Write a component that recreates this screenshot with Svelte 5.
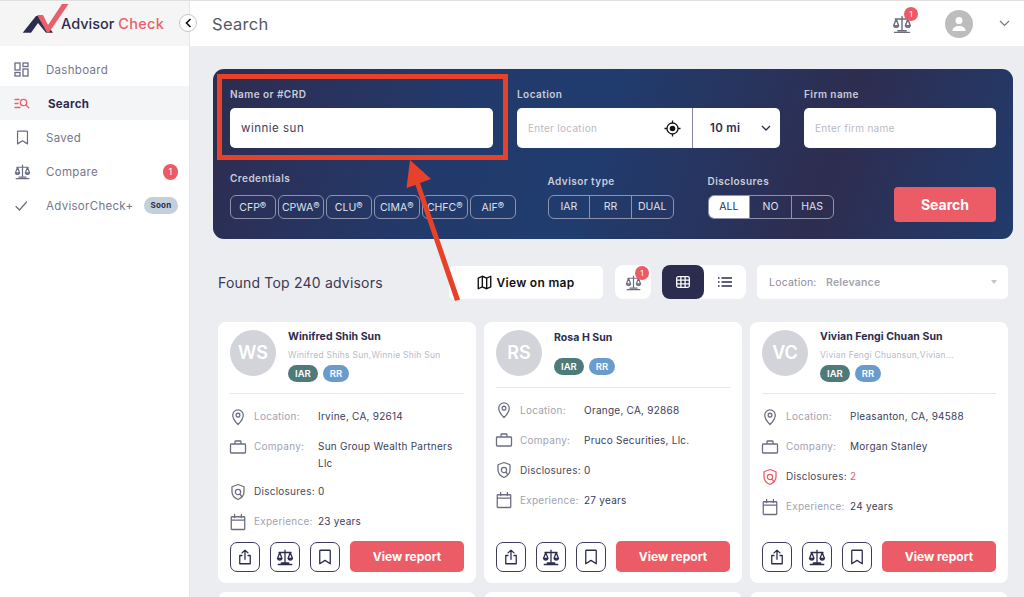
<script lang="ts">
	interface Row {
		label: string;
		value: string;
		icon: string;
		alert?: boolean;
	}

	interface Advisor {
		initials: string;
		name: string;
		alias: string;
		location: string;
		company: string;
		disclosures: number;
		experience: string;
	}

	const credentials = ['CFP', 'CPWA', 'CLU', 'CIMA', 'CHFC', 'AIF'];

	const advisors: Advisor[] = [
		{
			initials: 'WS',
			name: 'Winifred Shih Sun',
			alias: 'Winifred Shihs Sun,Winnie Shih Sun',
			location: 'Irvine, CA, 92614',
			company: 'Sun Group Wealth Partners Llc',
			disclosures: 0,
			experience: '23 years'
		},
		{
			initials: 'RS',
			name: 'Rosa H Sun',
			alias: '',
			location: 'Orange, CA, 92868',
			company: 'Pruco Securities, Llc.',
			disclosures: 0,
			experience: '27 years'
		},
		{
			initials: 'VC',
			name: 'Vivian Fengi Chuan Sun',
			alias: 'Vivian Fengi Chuansun,Vivian...',
			location: 'Pleasanton, CA, 94588',
			company: 'Morgan Stanley',
			disclosures: 2,
			experience: '24 years'
		}
	];

	const scales = 'M12 3v17M7 20h10M3 22h18M4 6h16M5 6l-3 8a3.2 3.2 0 0 0 6 0zM19 6l-3 8a3.2 3.2 0 0 0 6 0zM2 14h6M16 14h6';
	const pin = 'M12 22s7-7.2 7-12.5a7 7 0 0 0-14 0C5 14.800 12 22 12 22zM12 12a2.500 2.500 0 1 0 0-5 2.500 2.500 0 0 0 0 5z';
	const briefcase = 'M3 8h18a1 1 0 0 1 1 1v10a1 1 0 0 1-1 1H3a1 1 0 0 1-1-1V9a1 1 0 0 1 1-1zM8 8V5a1 1 0 0 1 1-1h6a1 1 0 0 1 1 1v3';
	const shield = 'M12 2l8 3v7c0 5-3.500 8-8 10-4.500-2-8-5-8-10V5zM12 15.500a3.500 3.500 0 1 0 0-7 3.500 3.500 0 0 0 0 7zM14.500 14.500l2 3';
	const calendar = 'M4 5h16a1 1 0 0 1 1 1v15a1 1 0 0 1-1 1H4a1 1 0 0 1-1-1V6a1 1 0 0 1 1-1zM3 9.500h18M7.500 2v4M16.500 2v4';
	const bookmark = 'M6 3h12a1 1 0 0 1 1 1v17l-7-4.500L5 21V4a1 1 0 0 1 1-1z';
	const share = 'M12 15V3M8 6.500L12 3l4 3.500M8 10H5v11h14V10h-3';

	function rowsFor(a: Advisor): Row[] {
		return [
			{ label: 'Location:', value: a.location, icon: pin },
			{ label: 'Company:', value: a.company, icon: briefcase },
			{ label: 'Disclosures:', value: String(a.disclosures), icon: shield, alert: a.disclosures > 0 },
			{ label: 'Experience:', value: a.experience, icon: calendar }
		];
	}
</script>

{#snippet icon(d: string, size: number)}
	<svg width={size} height={size} viewBox="0 0 24 24" fill="none" stroke="currentColor" stroke-width="1.7" stroke-linecap="round" stroke-linejoin="round"><path {d} /></svg>
{/snippet}

<div class="page">
	<aside class="sidebar">
		<div class="logo">
			<svg width="47" height="30" viewBox="0 0 47 30">
				<path d="M0.700 29.700L14 13L19 13L31 29.700L24 29.700L16 20L9 29.700Z" fill="#2b2c4e" />
				<path d="M15 12L21 12L26 22L40 1L46.500 1L27 29.500L25 29.500Z" fill="#e9606a" />
			</svg>
			<span class="logo-text"><span class="logo-a">Advisor</span> <span class="logo-b">Check</span></span>
		</div>
		<nav class="nav">
			<div class="nav-item">
				<span class="nav-icon">
					<svg width="15" height="15" viewBox="0 0 15 15" fill="none" stroke="currentColor" stroke-width="1.300"><rect x="1" y="1" width="5" height="7" /><rect x="9" y="1" width="5" height="3.500" /><rect x="1" y="10.500" width="5" height="3.500" /><rect x="9" y="7" width="5" height="7" /></svg>
				</span>
				<span>Dashboard</span>
			</div>
			<div class="nav-item active">
				<span class="nav-icon">
					<svg width="16" height="15" viewBox="0 0 16 15" fill="none" stroke="#e9606a" stroke-width="1.300" stroke-linecap="round"><path d="M1 3.500h4M1 7.500h3M1 11.500h5" /><circle cx="9.500" cy="6.500" r="3.200" /><path d="M12 9l2.800 2.800" /></svg>
				</span>
				<span class="nav-label">Search</span>
			</div>
			<div class="nav-item">
				<span class="nav-icon">{@render icon(bookmark, 17)}</span>
				<span>Saved</span>
			</div>
			<div class="nav-item">
				<span class="nav-icon">{@render icon(scales, 17)}</span>
				<span>Compare</span>
				<span class="count">1</span>
			</div>
			<div class="nav-item">
				<span class="nav-icon">
					<svg width="14" height="14" viewBox="0 0 14 14" fill="none" stroke="currentColor" stroke-width="1.200" stroke-linecap="round"><path d="M2 7.500l3.500 3.500L12.500 3" /></svg>
				</span>
				<span>AdvisorCheck+</span>
				<span class="soon">Soon</span>
			</div>
		</nav>
	</aside>

	<div class="content">
		<header class="topbar">
			<h1>Search</h1>
			<div class="top-right">
				<span class="top-scales">
					{@render icon(scales, 20)}
					<span class="mini-badge">1</span>
				</span>
				<span class="avatar">
					<svg width="16" height="16" viewBox="0 0 16 16" fill="#fff"><circle cx="8" cy="4.500" r="3.500" /><path d="M1.500 15c0-3.500 2.500-5 6.500-5s6.500 1.500 6.500 5z" /></svg>
				</span>
				<svg width="11" height="7" viewBox="0 0 11 7" fill="none" stroke="#77787f" stroke-width="1.200"><path d="M1 1l4.500 4.500L10 1" /></svg>
			</div>
		</header>

		<main class="main">
			<section class="panel">
				<div class="fields">
					<div class="field">
						<span class="label">Name or #CRD</span>
						<div class="input value">winnie sun</div>
					</div>
					<div class="field">
						<span class="label">Location</span>
						<div class="location">
							<div class="loc-input">
								<span class="placeholder">Enter location</span>
								<svg width="17" height="17" viewBox="0 0 17 17" fill="none" stroke="#111" stroke-width="1.300"><circle cx="8.500" cy="8.500" r="5.500" /><circle cx="8.500" cy="8.500" r="2.800" fill="#111" stroke="none" /><path d="M8.500 0.500v2.500M8.500 14v2.500M0.500 8.500H3M14 8.500h2.500" /></svg>
							</div>
							<div class="loc-range">
								<span>10 mi</span>
								<svg width="10" height="6" viewBox="0 0 10 6" fill="none" stroke="#2b2c4e" stroke-width="1.300"><path d="M1 1l4 4 4-4" /></svg>
							</div>
						</div>
					</div>
					<div class="field">
						<span class="label">Firm name</span>
						<div class="input"><span class="placeholder">Enter firm name</span></div>
					</div>
				</div>
				<div class="filters">
					<div class="group credentials">
						<span class="label">Credentials</span>
						<div class="chips">
							{#each credentials as c}
								<span class="chip">{c}<sup>®</sup></span>
							{/each}
						</div>
					</div>
					<div class="group advisor-type">
						<span class="label">Advisor type</span>
						<div class="seg">
							<span>IAR</span><span>RR</span><span>DUAL</span>
						</div>
					</div>
					<div class="group disclosures">
						<span class="label">Disclosures</span>
						<div class="seg">
							<span class="on">ALL</span><span>NO</span><span>HAS</span>
						</div>
					</div>
					<button class="search-btn">Search</button>
				</div>
			</section>

			<div class="toolbar">
				<span class="found">Found Top 240 advisors</span>
				<button class="map-btn">
					<svg width="15" height="15" viewBox="0 0 24 24" fill="none" stroke="#111" stroke-width="2.200" stroke-linejoin="round"><path d="M2 5l6.500-3 7 3L22 2v17l-6.500 3-7-3L2 22zM8.500 2v17M15.500 5v17" /></svg>
					View on map
				</button>
				<span class="compare-btn">
					{@render icon(scales, 17)}
					<span class="mini-badge small">1</span>
				</span>
				<div class="views">
					<span class="view on">
						<svg width="14" height="12" viewBox="0 0 14 12" fill="none" stroke="#fff" stroke-width="1.300"><rect x="0.700" y="0.700" width="12.600" height="10.600" rx="1.500" /><path d="M0.700 4.200h12.600M0.700 7.800h12.600M4.900 0.700v10.600M9.100 0.700v10.600" /></svg>
					</span>
					<span class="view">
						<svg width="14" height="10" viewBox="0 0 14 10" fill="none" stroke="#2b2c4e" stroke-width="1.500"><path d="M3.500 1H14M3.500 5H14M3.500 9H14M0 1h1.500M0 5h1.500M0 9h1.500" /></svg>
					</span>
				</div>
				<div class="sort">
					<span class="sort-label">Location:</span>
					<span class="sort-value">Relevance</span>
					<span class="caret"></span>
				</div>
			</div>

			<div class="cards">
				{#each advisors as a}
					<article class="card">
						<div class="card-head" class:compact={!a.alias}>
							<div class="initials">{a.initials}</div>
							<div class="who">
								<div class="name">{a.name}</div>
								{#if a.alias}<div class="alias">{a.alias}</div>{/if}
								<div class="badges">
									<span class="badge iar">IAR</span>
									<span class="badge rr">RR</span>
								</div>
							</div>
						</div>
						<div class="rows" class:tight={!a.alias}>
							{#each rowsFor(a) as r}
								<div class="row" class:dark={r.label === 'Disclosures:'}>
									<span class="row-icon" class:alert={r.alert}>{@render icon(r.icon, 18)}</span>
									<span class="row-label">{r.label}</span>
									<span class="row-value" class:alert={r.alert}>{r.value}</span>
								</div>
							{/each}
						</div>
						<div class="actions">
							<span class="act">{@render icon(share, 18)}</span>
							<span class="act">{@render icon(scales, 18)}</span>
							<span class="act">{@render icon(bookmark, 18)}</span>
							<button class="report">View report</button>
						</div>
					</article>
				{/each}
				<article class="card"></article>
				<article class="card"></article>
				<article class="card"></article>
			</div>
		</main>
	</div>

	<button class="collapse" aria-label="Collapse">
		<svg width="7" height="10" viewBox="0 0 7 10" fill="none" stroke="#111" stroke-width="1.600"><path d="M5.500 1L1.500 5l4 4" /></svg>
	</button>

	<!-- annotation drawn over the screenshot -->
	<div class="callout"></div>
	<svg class="arrow" width="1024" height="597" viewBox="0 0 1024 597">
		<path d="M410 160L431 179L420 183L460 299.500L455 301L415.500 185L406.500 188Z" fill="#e8412a" />
	</svg>
</div>

<style>
	:global(body) {
		margin: 0;
		overflow: hidden;
		background: #ecedf0;
	}

	.page {
		position: relative;
		display: flex;
		width: 1024px;
		height: 597px;
		overflow: hidden;
		font-family: Inter, 'Liberation Sans', sans-serif;
		color: #2b2c4e;
		border-top: 1px solid #dfdfe2;
		box-sizing: border-box;
	}

	.sidebar {
		flex: 0 0 189px;
		background: #fff;
		border-right: 1px solid #e6e6ea;
	}

	.logo {
		display: flex;
		align-items: flex-end;
		height: 45px;
		box-sizing: border-box;
		padding: 0 0 13px 22px;
		background: #f5f5f6;
	}

	.logo svg {
		flex: none;
		margin-right: -8px;
	}

	.logo-text {
		font-size: 14.500px;
		font-weight: 500;
		line-height: 17px;
		white-space: nowrap;
		margin-bottom: 1px;
	}

	.logo-a {
		color: #2b2c4e;
	}

	.logo-b {
		color: #e9606a;
		letter-spacing: 0.3px;
	}

	.nav {
		padding-top: 6px;
	}

	.nav-item {
		display: flex;
		align-items: center;
		height: 34px;
		box-sizing: border-box;
		padding: 1px 11px 0 14px;
		font-size: 11.500px;
		color: #77778c;
		letter-spacing: 0.3px;
	}

	.nav-item.active {
		background: #f4f5f7;
		color: #2b2c4e;
		font-weight: 700;
	}

	.nav-label {
		margin-left: 2px;
	}

	.nav-icon {
		display: flex;
		flex: 0 0 32px;
		color: #6c6c82;
	}

	.count {
		margin-left: auto;
		width: 15px;
		height: 16px;
		border-radius: 8px;
		background: #ee5a64;
		color: #fff;
		font-size: 9px;
		line-height: 16px;
		text-align: center;
	}

	.soon {
		margin-left: auto;
		width: 34px;
		height: 17px;
		border-radius: 9px;
		background: #c3d0da;
		color: #2b2c4e;
		font-size: 8px;
		font-weight: 700;
		line-height: 17px;
		text-align: center;
	}

	.content {
		flex: 1;
		min-width: 0;
	}

	.topbar {
		display: flex;
		align-items: center;
		justify-content: space-between;
		height: 45px;
		padding: 0 14px 0 22px;
		background: #fff;
	}

	h1 {
		margin: 0;
		font-size: 16.500px;
		font-weight: 400;
		color: #56566a;
		letter-spacing: 0.3px;
	}

	.top-right {
		display: flex;
		align-items: center;
	}

	.top-scales {
		position: relative;
		display: flex;
		margin-right: 33px;
		color: #6c6c82;
	}

	.mini-badge {
		position: absolute;
		top: -7px;
		right: -6px;
		width: 14px;
		height: 14px;
		border-radius: 50%;
		background: #ee5a64;
		color: #fff;
		font-size: 8px;
		line-height: 14px;
		text-align: center;
	}

	.avatar {
		display: flex;
		align-items: center;
		justify-content: center;
		width: 28px;
		height: 28px;
		margin-right: 26px;
		border-radius: 50%;
		background: #bdbdbd;
	}

	.main {
		padding: 23px 11px 0 23px;
	}

	.panel {
		height: 170px;
		box-sizing: border-box;
		padding: 17px 17px 0;
		border-radius: 11px;
		background: linear-gradient(108deg, #2e2c50 0%, #223a6b 30%, #203c6e 48%, #2e2d50 76%, #213b6c 100%);
	}

	.fields {
		display: grid;
		grid-template-columns: 263px 263px 192px;
		gap: 24px;
	}

	.label {
		display: block;
		font-size: 10px;
		font-weight: 600;
		line-height: 14px;
		color: #c9ccd8;
		letter-spacing: 0.45px;
	}

	.field .label {
		padding-top: 1px;
		margin-bottom: 7px;
	}

	.input {
		display: flex;
		align-items: center;
		height: 40px;
		box-sizing: border-box;
		padding: 0 11px;
		border-radius: 5px;
		background: #fff;
		font-size: 11px;
	}

	.input.value {
		font-size: 11.500px;
		letter-spacing: 0.5px;
		color: #3d3d58;
	}

	.placeholder {
		font-size: 10px;
		color: #b9b9c6;
		letter-spacing: 0.3px;
	}

	.location {
		display: flex;
		height: 40px;
		border-radius: 5px;
		background: #fff;
		overflow: hidden;
	}

	.loc-input {
		display: flex;
		flex: 0 0 176px;
		align-items: center;
		justify-content: space-between;
		box-sizing: border-box;
		padding: 0 11px;
		border-right: 1px solid #85869c;
	}

	.loc-range {
		display: flex;
		flex: 1;
		align-items: center;
		justify-content: space-between;
		padding: 0 9px 0 17px;
		font-size: 11.500px;
		font-weight: 600;
		letter-spacing: 0.3px;
		color: #2b2c4e;
	}

	.filters {
		display: flex;
		align-items: flex-end;
		margin-top: 23px;
	}

	.group .label {
		margin-bottom: 7px;
	}

	.credentials .label {
		margin-bottom: 10px;
	}

	.chips {
		display: flex;
		gap: 2.500px;
	}

	.chip {
		display: flex;
		align-items: center;
		justify-content: center;
		width: 45.500px;
		height: 24px;
		box-sizing: border-box;
		border: 1px solid #8d93ac;
		border-radius: 6px;
		font-size: 10.500px;
		color: #dfe1ea;
	}

	.chip sup {
		font-size: 9.500px;
		line-height: 0;
		margin-top: -3px;
		vertical-align: baseline;
	}

	.advisor-type {
		margin-left: 32px;
	}

	.disclosures {
		margin-left: 34px;
	}

	.seg {
		display: flex;
		width: 126px;
		height: 24px;
		box-sizing: border-box;
		border: 1px solid #8d93ac;
		border-radius: 6px;
		overflow: hidden;
	}

	.seg span {
		flex: 1;
		font-size: 10.500px;
		line-height: 22px;
		text-align: center;
		color: #dfe1ea;
		border-left: 1px solid #8d93ac;
	}

	.seg span:first-child {
		border-left: none;
	}

	.seg .on {
		background: #fff;
		color: #2b2c4e;
	}

	.search-btn {
		width: 102px;
		height: 35px;
		margin: 0 0 -3px auto;
		border: none;
		border-radius: 4px;
		background: #ec5c66;
		color: #fff;
		font-family: inherit;
		font-size: 14px;
		font-weight: 700;
	}

	.toolbar {
		display: flex;
		align-items: center;
		height: 34px;
		margin: 26px 0 0;
		padding: 0 5px;
	}

	.found {
		flex: 0 0 231px;
		font-size: 14px;
		color: #3a3a55;
		letter-spacing: 0.2px;
	}

	.map-btn {
		display: flex;
		align-items: center;
		justify-content: center;
		gap: 4px;
		width: 154px;
		height: 33px;
		border: none;
		border-radius: 5px;
		background: #fff;
		color: #111;
		font-family: inherit;
		font-size: 12px;
		font-weight: 600;
		letter-spacing: 0.3px;
	}

	.compare-btn {
		position: relative;
		display: flex;
		align-items: center;
		justify-content: center;
		width: 36px;
		height: 34px;
		margin-left: 12px;
		border-radius: 8px;
		background: #fff;
		color: #6c6c82;
	}

	.mini-badge.small {
		top: 1px;
		right: 2px;
	}

	.views {
		display: flex;
		margin-left: 11px;
		height: 34px;
		border-radius: 8px;
		background: #fff;
	}

	.view {
		display: flex;
		align-items: center;
		justify-content: center;
		width: 42px;
		border-radius: 8px;
	}

	.view.on {
		background: #2b2c4e;
	}

	.sort {
		display: flex;
		align-items: center;
		flex: 1;
		height: 34px;
		box-sizing: border-box;
		margin-left: 11px;
		padding: 0 11px 0 12px;
		border-radius: 5px;
		background: #fff;
		font-size: 10.500px;
		letter-spacing: 0.2px;
	}

	.sort-label {
		flex: 0 0 57px;
		color: #8b8b9c;
	}

	.sort-value {
		color: #a3a3ae;
		font-weight: 600;
	}

	.caret {
		margin-left: auto;
		border-left: 3.500px solid transparent;
		border-right: 3.500px solid transparent;
		border-top: 4px solid #c4c4cc;
	}

	.cards {
		display: grid;
		grid-template-columns: repeat(3, 258px);
		grid-auto-rows: 261px;
		gap: 9px 8px;
		margin: 23px 0 0 5px;
	}

	.card {
		display: flex;
		flex-direction: column;
		box-sizing: border-box;
		padding: 8px 12px 11px;
		border-radius: 8px;
		background: #fff;
	}

	.card-head {
		display: flex;
		height: 63px;
		flex: none;
		gap: 12px;
		border-bottom: 1px solid #e6e6ea;
	}

	.card-head.compact {
		height: 57px;
	}

	.initials {
		flex: none;
		width: 46px;
		height: 46px;
		border-radius: 50%;
		background: #d2d4da;
		color: #fff;
		font-size: 18px;
		font-weight: 600;
		line-height: 46px;
		text-align: center;
	}

	.name {
		font-size: 10.500px;
		font-weight: 700;
		line-height: 13px;
		letter-spacing: 0.05px;
		color: #2b2c4e;
	}

	.alias {
		margin-top: 6px;
		font-size: 8.500px;
		line-height: 12px;
		letter-spacing: 0.25px;
		color: #b9b9c6;
	}

	.badges {
		display: flex;
		gap: 5px;
		margin-top: 4px;
	}

	.compact .badges {
		margin-top: 14px;
	}

	.compact .name {
		margin-top: 1px;
	}

	.badge {
		height: 17px;
		padding: 0 7px;
		border-radius: 9px;
		color: #fff;
		font-size: 9.500px;
		font-weight: 600;
		line-height: 17px;
	}

	.iar {
		background: #4f7a7a;
	}

	.rr {
		background: #6a9bcd;
	}

	.rows {
		padding-top: 8px;
	}

	.rows.tight {
		padding-top: 7.500px;
	}

	.row {
		display: grid;
		grid-template-columns: 24px 64px 1fr;
		align-items: start;
		min-height: 30px;
		box-sizing: border-box;
		padding: 6px 0 5px;
		font-size: 10px;
		line-height: 17px;
		letter-spacing: 0.25px;
	}

	.row-icon {
		display: flex;
		height: 17px;
		margin-left: -1px;
		align-items: center;
		color: #6c6c82;
	}

	.row-icon.alert,
	.row-value.alert {
		color: #ee5a64;
	}

	.row-label {
		color: #a2a2b0;
		white-space: nowrap;
	}

	.row.dark .row-label {
		color: #4a4a60;
	}

	.row-value {
		color: #3d3d58;
	}

	.actions {
		display: flex;
		align-items: center;
		gap: 10px;
		margin-top: auto;
	}

	.act {
		display: flex;
		align-items: center;
		justify-content: center;
		width: 30px;
		height: 30px;
		box-sizing: border-box;
		border: 1px solid #3d3e5e;
		border-radius: 7px;
		color: #2b2c4e;
	}

	.report {
		flex: 1;
		height: 31px;
		border: none;
		border-radius: 5px;
		background: #ec5c66;
		color: #fff;
		font-family: inherit;
		font-size: 12px;
		font-weight: 700;
	}

	.collapse {
		position: absolute;
		top: 13px;
		left: 179px;
		display: flex;
		align-items: center;
		justify-content: center;
		width: 18px;
		height: 18px;
		padding: 0;
		border: 1px solid #c5c6d0;
		border-radius: 50%;
		background: #fff;
	}

	.callout {
		position: absolute;
		top: 73px;
		left: 217px;
		width: 291px;
		height: 86px;
		box-sizing: border-box;
		border: 5px solid #e8412a;
	}

	.arrow {
		position: absolute;
		top: -1px;
		left: 0;
		pointer-events: none;
	}
</style>
